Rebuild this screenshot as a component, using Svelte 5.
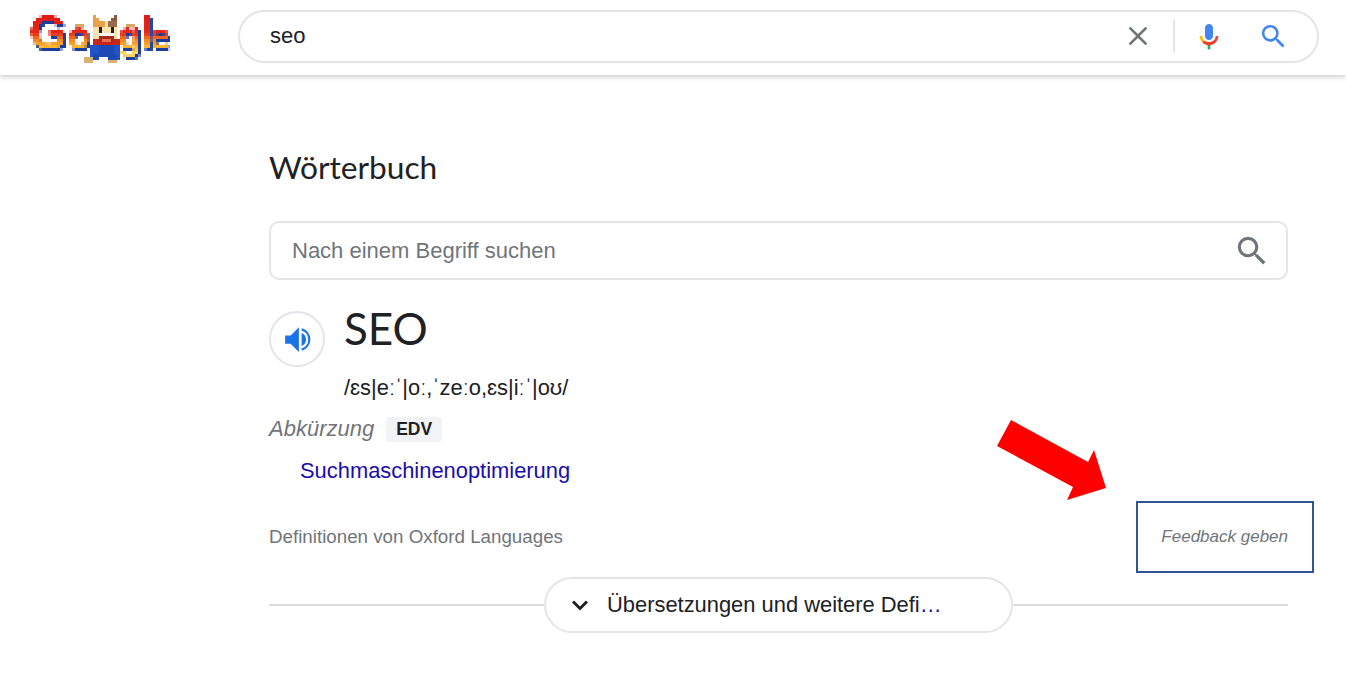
<script>
  const source = 'Definitionen von Oxford Languages';
</script>

<header class="topbar">
  <svg class="logo" width="140" height="75" viewBox="30 0 140 75" aria-label="Google">
    <defs>
      <linearGradient id="letters" gradientUnits="userSpaceOnUse" x1="0" y1="14" x2="0" y2="52">
        <stop offset="0" stop-color="#e01a12" />
        <stop offset="0.5" stop-color="#e5261a" />
        <stop offset="0.68" stop-color="#f4871f" />
        <stop offset="0.85" stop-color="#fbb52e" />
        <stop offset="1" stop-color="#ffd35a" />
      </linearGradient>
      <filter id="pixel" filterUnits="userSpaceOnUse" x="30" y="0" width="140" height="75">
        <feFlood x="31" y="1" width="1" height="1" />
        <feComposite width="3" height="3" />
        <feTile result="grid" />
        <feComposite in="SourceGraphic" in2="grid" operator="in" />
        <feMorphology operator="dilate" radius="1" />
        <feGaussianBlur stdDeviation="0.5" />
      </filter>
    </defs>
    <g filter="url(#pixel)">
      <g class="logo-text">
        <text y="49"><tspan x="29" font-size="49">G</tspan><tspan x="67" font-size="38">o</tspan></text>
        <text y="49"><tspan x="118" font-size="38">g</tspan><tspan x="140" font-size="48">l</tspan><tspan x="150" font-size="37">e</tspan></text>
      </g>
      <!-- cat -->
      <polygon fill="#eaa24c" points="93,13 101,22 101,28 93,28" />
      <polygon fill="#8a5a44" points="117,13 109,22 109,28 117,28" />
      <rect x="76" y="24" width="9" height="4" fill="#d9a860" />
      <rect x="127" y="24" width="9" height="4" fill="#d9a860" />
      <rect x="92" y="22" width="26" height="22" fill="#f6e3b0" />
      <rect x="94" y="21" width="10" height="7" fill="#e8a24a" />
      <rect x="108" y="21" width="9" height="6" fill="#9a6a4c" />
      <rect x="100" y="27" width="3" height="6" fill="#2a1c14" />
      <rect x="110" y="27" width="3" height="6" fill="#2a1c14" />
      <rect x="93" y="39" width="26" height="7" fill="#c8281c" />
      <rect x="98" y="33" width="17" height="10" fill="#a82a1c" />
      <rect x="99" y="33" width="15" height="3" fill="#fff" />
      <rect x="102" y="39" width="9" height="4" fill="#ea6c50" />
      <rect x="99" y="45" width="17" height="11" fill="#1d48b4" />
      <rect x="90" y="45" width="9" height="14" fill="#2453c8" />
      <rect x="113" y="45" width="7" height="14" fill="#2453c8" />
      <rect x="93" y="54" width="7" height="6" fill="#1d48b4" />
      <rect x="108" y="54" width="8" height="6" fill="#1d48b4" />
      <rect x="84" y="58" width="10" height="5" fill="#d9b070" />
      <rect x="107" y="59" width="11" height="5" fill="#d9b070" />
    </g>
  </svg>

  <div class="searchbox">
    <span class="query">seo</span>
    <button class="icon-btn" aria-label="Löschen">
      <svg width="32" height="32" viewBox="0 0 24 24"><path fill="#70757a" d="M19 6.41 17.59 5 12 10.59 6.41 5 5 6.41 10.59 12 5 17.59 6.41 19 12 13.41 17.59 19 19 17.59 13.41 12z" /></svg>
    </button>
    <span class="divider"></span>
    <button class="icon-btn" aria-label="Spracheingabe">
      <svg width="32" height="32" viewBox="0 0 24 24">
        <path fill="#4285f4" d="M12 15c1.66 0 3-1.31 3-2.97V5.97C15 4.31 13.66 3 12 3S9 4.31 9 5.97v6.06C9 13.69 10.34 15 12 15z" />
        <path fill="#34a853" d="M11 18h2v4h-2z" />
        <path fill="#fbbc04" d="M7.05 16.87c-1.27-1.33-2.05-2.83-2.05-4.87h2c0 1.45.56 2.42 1.47 3.38v.32l-1.15 1.18z" />
        <path fill="#ea4335" d="M12 19c-1.9 0-3.6-.9-4.95-2.13l1.42-1.49c.9.73 2.1 1.12 3.53 1.12 2.9 0 5-1.9 5-4.5h2c0 3.6-3 7-7 7z" />
      </svg>
    </button>
    <button class="icon-btn" aria-label="Suche">
      <svg width="31" height="31" viewBox="0 0 24 24"><path fill="#4285f4" d="M15.5 14h-.79l-.28-.27A6.471 6.471 0 0 0 16 9.5 6.5 6.5 0 1 0 9.5 16c1.61 0 3.09-.59 4.23-1.57l.27.28v.79l5 4.99L20.49 19l-4.99-5zm-6 0C7.01 14 5 11.99 5 9.5S7.01 5 9.5 5 14 7.01 14 9.5 11.99 14 9.5 14z" /></svg>
    </button>
  </div>
</header>

<main class="content">
  <h2 class="heading">Wörterbuch</h2>

  <div class="dict-search">
    <span class="placeholder">Nach einem Begriff suchen</span>
    <svg width="38" height="38" viewBox="0 0 24 24"><path fill="#70757a" d="M15.5 14h-.79l-.28-.27A6.471 6.471 0 0 0 16 9.5 6.5 6.5 0 1 0 9.5 16c1.61 0 3.09-.59 4.23-1.57l.27.28v.79l5 4.99L20.49 19l-4.99-5zm-6 0C7.01 14 5 11.99 5 9.5S7.01 5 9.5 5 14 7.01 14 9.5 11.99 14 9.5 14z" /></svg>
  </div>

  <div class="entry">
    <button class="speaker" aria-label="Anhören">
      <svg width="33" height="33" viewBox="-1 0 24 24">
        <path fill="#1a73e8" d="M2 9v6h4l6 6V3L6 9z" />
        <path fill="#1a73e8" d="M14 7.2v9.6c2-.7 3.2-2.6 3.2-4.8S16 7.9 14 7.2z" />
        <path fill="none" stroke="#1a73e8" stroke-width="1.6" d="M14 4.6c3.3.9 5.6 3.9 5.6 7.4s-2.3 6.5-5.6 7.4" />
      </svg>
    </button>
    <div>
      <div class="word">SEO</div>
      <div class="phonetic">/ɛs|eːˈ|oː,ˈzeːo,ɛs|iːˈ|oʊ/</div>
    </div>
  </div>

  <div class="pos-row">
    <span class="pos">Abkürzung</span>
    <span class="tag">EDV</span>
  </div>

  <a class="meaning" href="#seo">Suchmaschinenoptimierung</a>

  <div class="source-row">
    <span class="source">{source}</span>
    <span class="feedback">
      Feedback geben
      <span class="marker"></span>
      <svg class="arrow" width="110" height="81" viewBox="0 0 110 81"><polygon fill="#ff0000" points="14,0 0,26 76,67 70,80 109,68 97,30 91,42" /></svg>
    </span>
  </div>

  <div class="more-row">
    <button class="more">
      <svg width="24" height="24" viewBox="0 0 24 24"><path fill="none" stroke="#202124" stroke-width="3" d="M5 8.5l7 7 7-7" /></svg>
      <span class="more-label">Übersetzungen und weitere Defi<span class="dots">…</span></span>
    </button>
  </div>
</main>

<style>
  :global(body) {
    background: #fff;
    font-family: "Liberation Sans", Arial, sans-serif;
    overflow: hidden;
  }
  .topbar {
    display: flex;
    align-items: center;
    height: 75px;
    padding: 0 27px 0 30px;
    box-sizing: border-box;
    box-shadow: 0 2px 5px rgba(0, 0, 0, 0.2);
  }
  .logo {
    flex: none;
    margin-right: 68px;
  }
  .logo-text {
    filter: drop-shadow(2px 3px 0 #1a3d9c);
  }
  .logo-text text {
    font-family: "Liberation Sans", sans-serif;
    font-weight: 700;
    fill: url(#letters);
  }
  .searchbox {
    flex: 1;
    display: flex;
    align-items: center;
    height: 53px;
    box-sizing: border-box;
    border: 2px solid #e3e5e8;
    border-radius: 27px;
    padding: 0 28px 0 30px;
    margin-top: -3px;
  }
  .query {
    flex: 1;
    font-size: 22px;
    color: #202124;
  }
  .icon-btn {
    display: flex;
    padding: 0;
    border: 0;
    background: none;
  }
  .divider {
    width: 2px;
    height: 32px;
    background: #e3e5e8;
    margin: 0 18px 0 19px;
  }
  .icon-btn:last-child {
    margin-left: 33px;
  }
  .content {
    width: 1019px;
    margin-left: 269px;
    padding-top: 73px;
  }
  .heading {
    margin: 0;
    font-family: Lato, sans-serif;
    font-weight: 400;
    font-size: 31.7px;
    line-height: 39px;
    color: #202124;
  }
  .dict-search {
    display: flex;
    align-items: center;
    justify-content: space-between;
    height: 59px;
    box-sizing: border-box;
    border: 2px solid #e3e5e8;
    border-radius: 10px;
    padding: 0 15px 0 21px;
    margin-top: 34px;
  }
  .placeholder {
    font-size: 22px;
    color: #70757a;
  }
  .entry {
    display: flex;
    gap: 19px;
    margin-top: 18px;
  }
  .speaker {
    flex: none;
    display: flex;
    align-items: center;
    justify-content: center;
    width: 56px;
    height: 56px;
    margin-top: 13px;
    padding: 0;
    background: #fff;
    border: 2px solid #e3e5e8;
    border-radius: 50%;
  }
  .word {
    font-family: Lato, sans-serif;
    font-size: 44px;
    line-height: 60px;
    color: #202124;
  }
  .phonetic {
    margin-top: 16px;
    font-size: 21.9px;
    line-height: 28px;
    color: #202124;
  }
  .pos-row {
    display: flex;
    align-items: center;
    gap: 12px;
    margin-top: 14px;
  }
  .pos {
    font-size: 22px;
    font-style: italic;
    color: #70757a;
  }
  .tag {
    padding: 0 10px;
    background: #f1f3f4;
    border-radius: 4px;
    font-size: 17.5px;
    line-height: 25px;
    font-weight: 700;
    color: #202124;
  }
  .meaning {
    display: block;
    margin: 14px 0 0 31px;
    font-size: 21.9px;
    line-height: 30px;
    color: #1a0dab;
    text-decoration: none;
  }
  .source-row {
    display: flex;
    justify-content: space-between;
    align-items: center;
    margin-top: 40px;
  }
  .source {
    font-size: 18.75px;
    color: #70757a;
  }
  .feedback {
    position: relative;
    font-size: 17px;
    font-style: italic;
    color: #70757a;
  }
  .marker {
    position: absolute;
    left: -25px;
    top: -26px;
    width: 174px;
    height: 68px;
    border: 2px solid #2f5597;
  }
  .arrow {
    position: absolute;
    left: -164px;
    top: -107px;
  }
  .more-row {
    display: flex;
    justify-content: center;
    align-items: center;
    margin-top: 29px;
    background: linear-gradient(#dadce0, #dadce0) center / 100% 2px no-repeat;
  }
  .more {
    display: flex;
    align-items: center;
    gap: 15px;
    width: 469px;
    height: 56px;
    padding: 0 22px;
    box-sizing: border-box;
    background: #fff;
    border: 2px solid #e3e5e8;
    border-radius: 28px;
    font: inherit;
    font-size: 21.9px;
    color: #202124;
  }
  .dots {
    color: #1a0dab;
  }
</style>
